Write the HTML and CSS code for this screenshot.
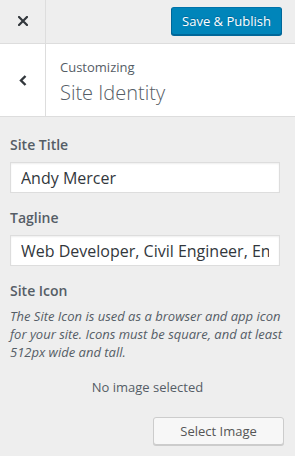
FILE: index.html
```html
<!DOCTYPE html>
<html lang="en">
<head>
    <meta charset="UTF-8" />
    <meta name="viewport" content="width=device-width, initial-scale=1.0"/>
    <title>Customize: Site Identity</title>
    <link rel="stylesheet" href="styles.css">
</head>
<body>
<div class="topbar">
    <a class="close-btn" href="#" aria-label="Close">
        <svg width="10" height="10" viewBox="0 0 10 10">
            <path d="M1 1 L9 9 M9 1 L1 9" stroke="#32373c" stroke-width="2.2" stroke-linecap="square" fill="none"/>
        </svg>
    </a>
    <button class="button primary">Save &amp; Publish</button>
</div>

<div class="section-head">
    <a class="back-btn" href="#" aria-label="Back">
        <svg width="8" height="11" viewBox="0 0 8 11">
            <path d="M6.5 1 L2 5.5 L6.5 10" stroke="#32373c" stroke-width="2.4" fill="none"/>
        </svg>
    </a>
    <div class="section-title">
        <span class="eyebrow">Customizing</span>
        <h1>Site Identity</h1>
    </div>
</div>

<div class="controls">
    <label class="control-label" for="blogname">Site Title</label>
    <input id="blogname" class="text-input" type="text" value="Andy Mercer">

    <label class="control-label" for="blogdescription">Tagline</label>
    <input id="blogdescription" class="text-input" type="text" value="Web Developer, Civil Engineer, Enthusiast">

    <span class="control-label tight">Site Icon</span>
    <p class="description">The Site Icon is used as a browser and app icon for your site. Icons must be square, and at least 512px wide and tall.</p>
    <p class="placeholder">No image selected</p>
    <div class="actions">
        <button class="button">Select Image</button>
    </div>
</div>
</body>
</html>
```

FILE: styles.css
```css
* {
    margin: 0;
    padding: 0;
    box-sizing: border-box;
    font-family: "Open Sans", "Noto Sans", sans-serif;
}

body {
    background-color: #eee;
    color: #555d66;
    width: 295px;
    height: 456px;
    overflow: hidden;
}

.topbar {
    display: flex;
    align-items: center;
    justify-content: space-between;
    height: 44px;
    border-bottom: 1px solid #ddd;
    padding-right: 13px;
}

.close-btn,
.back-btn {
    display: flex;
    align-items: center;
    justify-content: center;
    width: 46px;
    height: 100%;
    border-right: 1px solid #ddd;
}

.close-btn {
    padding-bottom: 2px;
}

.button {
    height: 28px;
    padding: 0 10px;
    font-size: 13px;
    line-height: 26px;
    border-radius: 3px;
    border: 1px solid #ccc;
    background-color: #f7f7f7;
    color: #555;
    box-shadow: 0 1px 0 #ccc;
    cursor: pointer;
}

.button.primary {
    width: 111px;
    background-color: #0085ba;
    border-color: #0073aa #006799 #006799;
    box-shadow: 0 1px 0 #006799;
    color: #fff;
    text-shadow: 0 -1px 1px #006799;
    margin-bottom: 1px;
}

.section-head {
    display: flex;
    height: 73px;
    background-color: #fff;
    border-bottom: 1px solid #ddd;
}

.back-btn {
    padding-top: 1px;
}

.section-title {
    padding: 14px 0 0 14px;
}

.eyebrow {
    display: block;
    font-size: 13px;
    line-height: 18px;
    margin-bottom: 3px;
}

h1 {
    font-size: 20px;
    font-weight: 300;
    line-height: 27px;
}

.controls {
    padding: 17px 15px 0 10px;
    display: flex;
    flex-direction: column;
}

.control-label {
    display: block;
    font-size: 14px;
    font-weight: 600;
    line-height: 21px;
    margin-bottom: 7px;
}

.control-label.tight {
    margin-bottom: 6px;
}

.text-input {
    width: 270px;
    height: 31px;
    padding: 0 10px;
    border: 1px solid #ddd;
    background-color: #fff;
    box-shadow: inset 0 1px 2px rgba(0, 0, 0, 0.07);
    color: #32373c;
    font-size: 16px;
    margin-bottom: 14px;
    outline: none;
}

.description {
    font-size: 13px;
    font-style: italic;
    line-height: 18px;
    color: #555d66;
    margin-right: -12px;
}

.placeholder {
    margin-top: 17px;
    font-size: 13px;
    line-height: 18px;
    text-align: center;
    color: #555d66;
    padding-left: 5px;
}

.actions {
    display: flex;
    justify-content: flex-end;
    margin-top: 21px;
    margin-right: -4px;
}

.actions .button {
    width: 131px;
}
```
